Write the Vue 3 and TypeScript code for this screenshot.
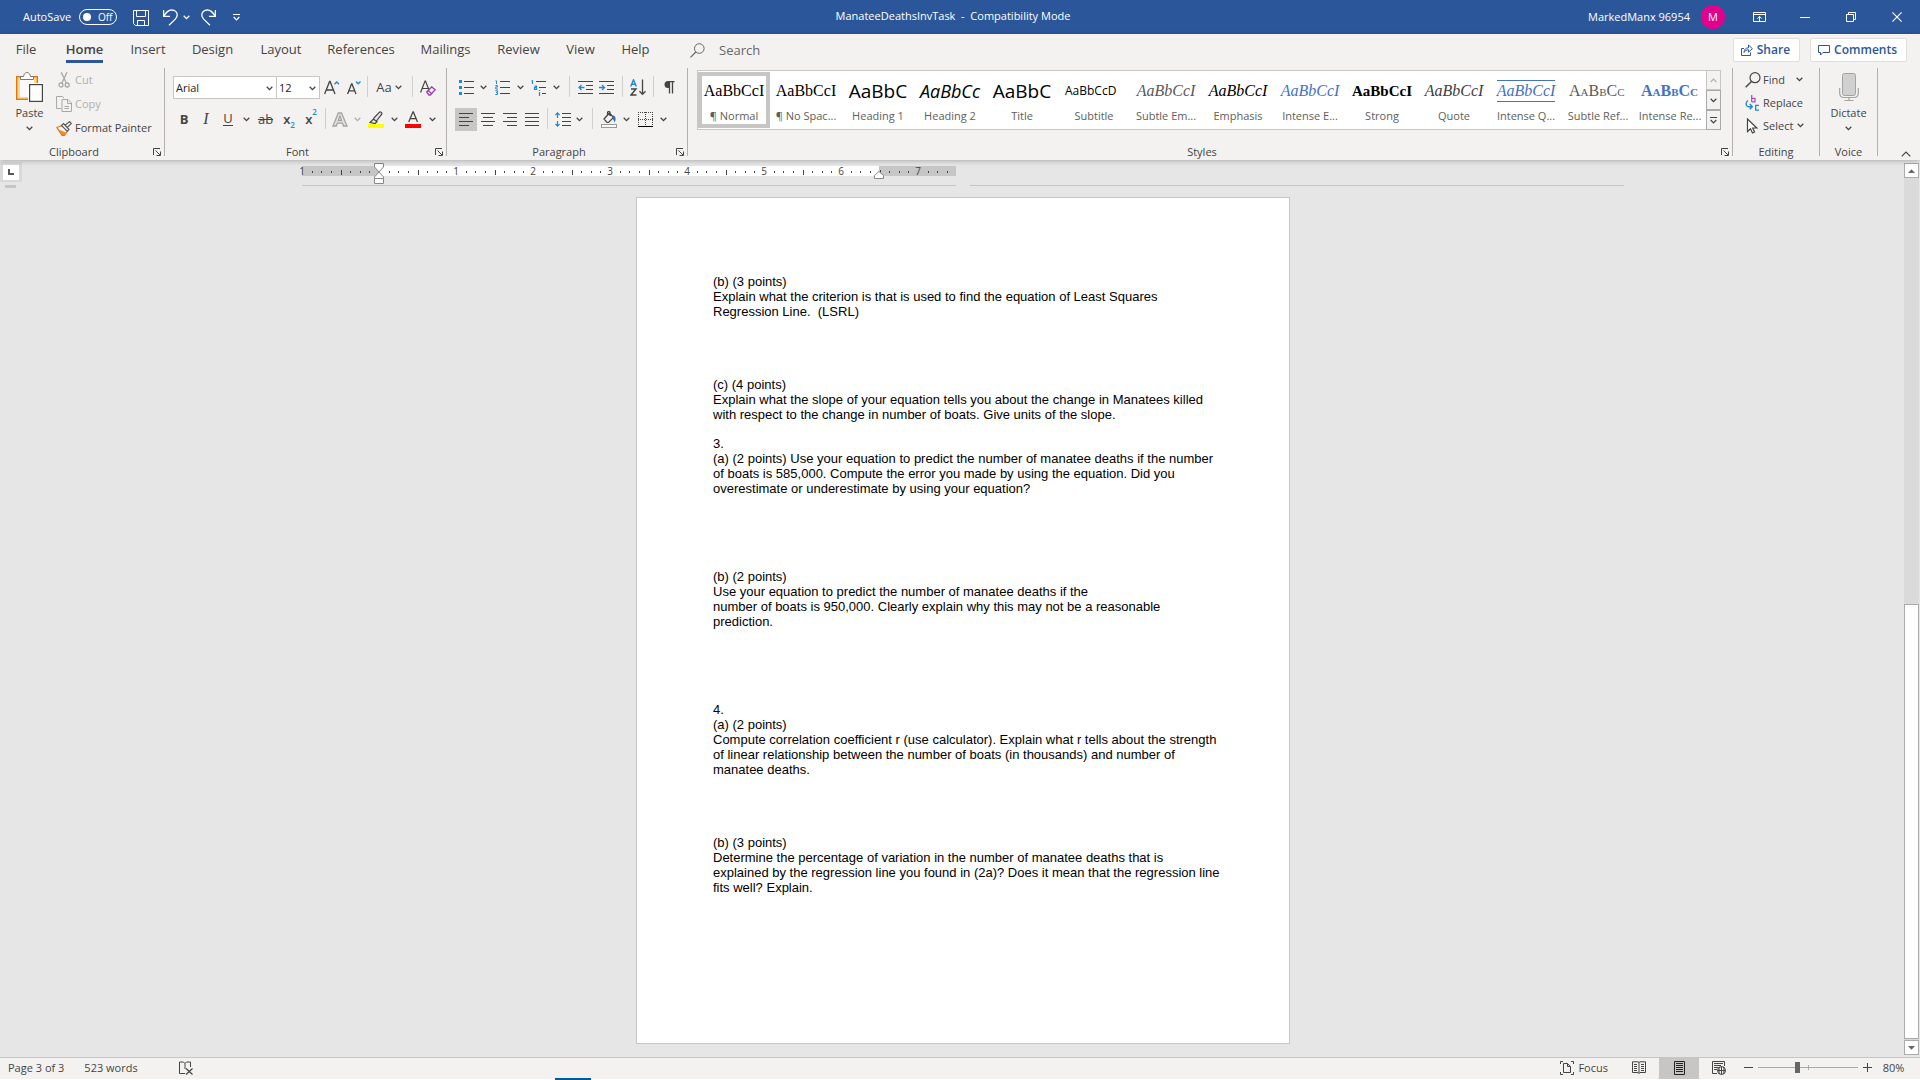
<script setup lang="ts">
import { h, ref } from 'vue'

interface Glyph { w: number; h: number; body: string }
interface Control { w: number; icon?: string; label?: string; off?: boolean; on?: boolean; sep?: boolean }

const K = '#444444'
const B = '#1e8bcd'
const lines = (xs: number[][]) =>
  xs.map(([x1, x2, y]) => `<path d="M${x1} ${y + 0.5}H${x2}" stroke="${K}"/>`).join('')

const glyphs: Record<string, Glyph> = {
  chev: { w: 7, h: 5, body: `<path d="M.7 .8L3.5 3.6L6.3 .8" stroke="currentColor" stroke-width="1.3"/>` },
  chevUp: { w: 7, h: 5, body: `<path d="M.7 4L3.5 1.2L6.3 4" stroke="currentColor" stroke-width="1.2"/>` },
  more: { w: 7, h: 7, body: `<path d="M0 .5H7M.7 3L3.5 5.8L6.3 3" stroke="currentColor" stroke-width="1.2"/>` },
  collapse: { w: 10, h: 6, body: `<path d="M.7 5.3L5 1L9.3 5.3" stroke="${K}" stroke-width="1.2"/>` },
  launch: { w: 8, h: 8, body: `<path d="M.5 7V.5H7M2.5 2.5L7 7M7.5 3.5V7.5H3.5" stroke="${K}"/>` },
  save: { w: 16, h: 16, body: `<path d="M.5 .5H15.5V15.5H2.5L.5 13.5ZM3.5 .5V6.5H12.5V.5M4.5 15.5V10.5H11.5V15.5" stroke="#fff"/>` },
  undo: { w: 15, h: 17, body: `<path d="M.6 1V7.4H7M1 7C3 3.5 5.5 1 8.6 1C12 1 14.2 3.2 14.2 6C14.2 7.7 13.4 9 12.3 10.1L6 16.2" stroke="#fff" stroke-width="1.3"/>` },
  redo: { w: 15, h: 17, body: `<path d="M14.4 1V7.4H8M14 7C12 3.5 9.5 1 6.4 1C3 1 .8 3.2 .8 6C.8 7.7 1.6 9 2.7 10.1L9 16.2" stroke="#fff" stroke-width="1.3"/>` },
  display: { w: 13, h: 10, body: `<path d="M.5 .5H12.5V9.5H.5ZM.5 2.5H12.5M6.5 9V4.5M4.3 6.6L6.5 4.4L8.7 6.6" stroke="#fff"/>` },
  min: { w: 10, h: 10, body: `<path d="M0 5.5H10" stroke="#fff"/>` },
  restore: { w: 10, h: 10, body: `<path d="M.5 2.5H7.5V9.5H.5ZM2.5 2.5V.5H9.5V7.5H7.5" stroke="#fff"/>` },
  close: { w: 10, h: 10, body: `<path d="M.4 .4L9.6 9.6M9.6 .4L.4 9.6" stroke="#fff" stroke-width="1.1"/>` },
  search: { w: 15, h: 15, body: `<circle cx="9.3" cy="5.5" r="4.8" stroke="#666"/><path d="M5.8 9L.5 14.3" stroke="#666" stroke-width="1.2"/>` },
  share: { w: 12, h: 12, body: `<path d="M3 4.5H.5V11.5H9.5V8.5" stroke="#2b579a"/><path d="M3 8.5C3.2 5.2 5 3.8 7.5 3.8V1L11.4 4.7L7.5 8.2V5.8C5.5 5.8 4 6.6 3 8.5Z" stroke="#2b579a"/>` },
  comment: { w: 12, h: 11, body: `<path d="M.5 .5H11.5V7.5H5L2.5 10V7.5H.5Z" stroke="#2b579a"/>` },
  paste: { w: 27, h: 30, body: `<rect x=".7" y="4.7" width="20.6" height="22.6" fill="#fbd98d" stroke="#e0760f" stroke-width="1.4"/><path d="M4 6H18V25H4Z" fill="#fafafa"/><path d="M4.5 7.5V4.5H7.5C8 2 9 .6 11 .6S14 2 14.5 4.5H17.5V7.5Z" fill="#fff" stroke="#777"/><rect x="12" y="11" width="15" height="19" fill="#fff"/><rect x="13.6" y="12.6" width="12.8" height="16.8" fill="#fff" stroke="#444" stroke-width="1.2"/>` },
  cut: { w: 12, h: 16, body: `<path d="M3.2 .3L8.3 11M9 .3L3.9 11" stroke="#a8a8a8" stroke-width="1.3"/><circle cx="3" cy="13" r="2" stroke="#a8a8a8" stroke-width="1.3"/><circle cx="9.2" cy="13" r="2" stroke="#a8a8a8" stroke-width="1.3"/>` },
  copy: { w: 16, h: 16, body: `<path d="M5 12.5H.5V.5H6.5L8 2" stroke="#a8a8a8"/><path d="M6 3.5H12L15.5 7V15.5H6ZM11.5 3.5V7.5H15.5M8.5 10.5H13M8.5 12.5H13" stroke="#a8a8a8"/>` },
  painter: { w: 16, h: 15, body: `<path d="M1 6.5L6.5 4.5L11.5 10L8.5 14.3H6Z" fill="#fff" stroke="#e0760f" stroke-width="1.3"/><path d="M3 8.5L10 11.5L8.5 14H6Z" fill="#ef8a2e"/><path d="M5.5 4.5L7.5 2.6L13 8.5L11.2 10.2ZM9 4.5L13.5 .6L15.3 2.4L11.3 6.5" fill="#fff" stroke="#555" stroke-width="1.1"/>` },
  grow: { w: 16, h: 15, body: `<path d="M.6 14L5.6 1.5H6.1L11 14M2.3 10H9.3" stroke="${K}" stroke-width="1.3"/><path d="M10.5 4.2L12.7 2L15 4.2" stroke="${B}" stroke-width="1.4"/>` },
  shrink: { w: 14, h: 15, body: `<path d="M.6 14L4.5 4H5L9 14M2.2 10.8H7.4" stroke="${K}" stroke-width="1.3"/><path d="M9 1.5L11.2 3.7L13.5 1.5" stroke="${B}" stroke-width="1.4"/>` },
  clear: { w: 16, h: 16, body: `<path d="M.6 12.5L5 1H5.5L9 10M2.2 8.5H8" stroke="${K}" stroke-width="1.2"/><path d="M6.7 12L11.7 7L15.2 9.7L10.2 15H9Z" fill="#fff" stroke="#9b3fae" stroke-width="1.4"/><path d="M8 10.5L12 14" stroke="#9b3fae" stroke-width="1.3"/>` },
  outlineA: { w: 16, h: 15, body: `<path d="M1 14L6.3 1H9.5L15 14H11.5L10.5 11.2H5.3L4.3 14ZM6.2 8.5H9.6L7.9 4Z" fill="#e4e4e4" stroke="#a3a3a3" stroke-width="1.3"/>` },
  highlight: { w: 16, h: 17, body: `<path d="M2 11.5L5.5 8L9 10.8L7 12.5ZM5.5 7.5L11.5 1.2C12.5 .3 14.5 1.8 13.7 3.2L8.5 10" stroke="${K}" stroke-width="1.2" fill="#e8e8e8"/><rect y="13" width="16" height="4" fill="#ffff00"/>` },
  fontColor: { w: 16, h: 17, body: `<path d="M3.7 11L8 .8H8.3L12.5 11M5.2 7.6H11" stroke="${K}" stroke-width="1.3"/><rect y="13" width="16" height="4" fill="#ff0000"/>` },
  bullets: { w: 15, h: 15, body: `<path d="M0 0H3V3H0ZM0 6H3V9H0ZM0 12H3V15H0Z" fill="${B}"/>` + lines([[5, 15, 1], [5, 15, 7], [5, 15, 13]]) },
  numbers: { w: 15, h: 15, body: lines([[5, 15, 1], [5, 15, 7], [5, 15, 13]]) + `<path d="M.5 .8H1.5V4M.3 5.6H2.5V7H.8V9H3M.3 10.7H2.5V12.5H1M2.5 12.5V14.5H.3" stroke="${B}"/>` },
  multi: { w: 16, h: 16, body: lines([[5, 15, 1], [8, 15, 7], [11, 15, 13]]) + `<path d="M.5 .8H1.5V4M3.5 6.2H5.5V9.5H3.5V7.7H5.5M8.5 12V16M8.5 10V11" stroke="${B}" stroke-width="1.2"/>` },
  outdent: { w: 15, h: 13, body: lines([[0, 15, 0], [8, 15, 4], [8, 15, 8], [0, 15, 12]]) + `<path d="M6.5 6.5H1M3.5 4L1 6.5L3.5 9" stroke="${B}" stroke-width="1.3"/>` },
  indent: { w: 15, h: 13, body: lines([[0, 15, 0], [8, 15, 4], [8, 15, 8], [0, 15, 12]]) + `<path d="M0 6.5H5.5M3 4L5.5 6.5L3 9" stroke="${B}" stroke-width="1.3"/>` },
  sort: { w: 17, h: 17, body: `<path d="M.7 7.5L3.5 .8L6.3 7.5M1.7 5.3H5.3" stroke="${B}" stroke-width="1.4"/><path d="M1 10H6L1 16H6.5" stroke="${K}" stroke-width="1.4"/><path d="M12.5 .5V15.5M9.5 12.2L12.5 15.4L15.5 12.2" stroke="${K}" stroke-width="1.3"/>` },
  pilcrow: { w: 11, h: 13, body: `<path d="M5 7H4A3.5 3.5 0 0 1 4 0H5Z" fill="${K}"/><path d="M5.5 12.5V.5M8.5 12.5V.5M4 .5H10.5" stroke="${K}" stroke-width="1.3"/>` },
  left: { w: 15, h: 13, body: lines([[0, 14, 0], [0, 10, 4], [0, 14, 8], [0, 10, 12]]) },
  center: { w: 15, h: 13, body: lines([[0, 14, 0], [2, 12, 4], [0, 14, 8], [2, 12, 12]]) },
  right: { w: 15, h: 13, body: lines([[0, 14, 0], [4, 14, 4], [0, 14, 8], [4, 14, 12]]) },
  justify: { w: 15, h: 13, body: lines([[0, 14, 0], [0, 14, 4], [0, 14, 8], [0, 14, 12]]) },
  spacing: { w: 16, h: 15, body: lines([[7, 16, 1], [7, 16, 5], [7, 16, 9], [7, 16, 13]]) + `<path d="M2.5 1V6M.5 3L2.5 .9L4.5 3M2.5 14V9M.5 12L2.5 14.1L4.5 12" stroke="${B}" stroke-width="1.2"/>` },
  shading: { w: 16, h: 17, body: `<path d="M3 8L8.5 2L12.5 6.5L7.5 11.5H6ZM6.5 4V1.5C6.5 .2 9 .2 9 1.5V5" stroke="${K}" stroke-width="1.2"/><path d="M12 4.5C15 5 15 8 13.8 11.5L11.5 7Z" fill="#2b6fb5"/><rect x=".5" y="13.5" width="15" height="3" stroke="#999" fill="#fff"/>` },
  borders: { w: 15, h: 15, body: `<path d="M0 .5H15M0 7.5H15M.5 0V14M7.5 0V14M14.5 0V14" stroke="${K}" stroke-dasharray="1 1"/><path d="M0 14.5H15" stroke="#000" stroke-width="1"/>` },
  find: { w: 16, h: 16, body: `<circle cx="10" cy="5.7" r="5" stroke="${K}" stroke-width="1.2"/><path d="M6.5 9.5L.6 15.3" stroke="${K}" stroke-width="1.4"/>` },
  replace: { w: 16, h: 16, body: `<path d="M6.7 0V7M6.7 3.3H10V6.9H6.7" stroke="#b24fc0" stroke-width="1.3"/><path d="M14 10.3H10.7V15.2H14" stroke="${B}" stroke-width="1.3"/><path d="M3 5.5C.5 7 .5 11 3 11.7H7M4.8 9L7.3 11.7L4.8 14.3" stroke="${B}" stroke-width="1.4"/>` },
  select: { w: 16, h: 16, body: `<path d="M2.5 1V13.5L5.5 10.7L7.5 15L9.5 14L7.7 10H11.8Z" fill="#fff" stroke="${K}" stroke-width="1.2"/>` },
  mic: { w: 20, h: 28, body: `<rect x="3.5" y=".5" width="13" height="22" rx="2" fill="#d0d0d0" stroke="#a3a3a3"/><path d="M.7 15V20C.7 23 2.5 24.5 5 24.5H15C17.5 24.5 19.3 23 19.3 20V15M10 24.5V27.5M5.5 27.5H14.5" stroke="#a3a3a3" stroke-width="1.2"/>` },
  proof: { w: 14, h: 14, body: `<path d="M6 12.5H.5V1H4.5L6 2.5L7.5 1H11.5V6M6 2.5V8" stroke="${K}"/><path d="M7 7.5L13.5 13.5M13.5 7.5L7 13.5" stroke="${K}" stroke-width="1.2"/>` },
  focus: { w: 14, h: 14, body: `<path d="M3 .5H.5V3M.5 11V13.5H3M11 .5H13.5V3M13.5 11V13.5H11M3.5 2.5H7.5L10.5 5.5V11.5H3.5ZM7.5 2.5V5.5H10.5" stroke="${K}"/>` },
  read: { w: 14, h: 13, body: `<path d="M7 1.5L6 .8H.5V11.5H6L7 12.5L8 11.5H13.5V.8H8ZM7 1.5V12.5M2 3.5H5M2 5.5H5M2 7.5H5M2 9.5H5M9 3.5H12M9 5.5H12M9 7.5H12M9 9.5H12" stroke="${K}"/>` },
  print: { w: 11, h: 14, body: `<path d="M.5 .5H10.5V13.5H.5ZM2 2.5H9M2 4.5H9M2 6.5H9M2 8.5H9M2 10.5H9" stroke="#222"/>` },
  web: { w: 14, h: 14, body: `<path d="M5 12.5H.5V.5H12.5V5M2 2.5H11M2 4.5H9M2 6.5H6M2 8.5H5" stroke="${K}"/><circle cx="9.5" cy="9.5" r="4" stroke="${K}"/><path d="M5.5 9.5H13.5M9.5 5.5V13.5M7.5 6C6.8 8 6.8 11 7.5 13M11.5 6C12.2 8 12.2 11 11.5 13" stroke="${K}"/>` },
  minus: { w: 9, h: 9, body: `<path d="M0 4.5H9" stroke="${K}"/>` },
  plus: { w: 9, h: 9, body: `<path d="M0 4.5H9M4.5 0V9" stroke="${K}"/>` },
  up: { w: 7, h: 4, body: `<path d="M0 4L3.5 .3L7 4Z" fill="#666"/>` },
  down: { w: 7, h: 4, body: `<path d="M0 0L3.5 3.7L7 0Z" fill="#666"/>` },
  tab: { w: 6, h: 6, body: `<path d="M1 0V5H6" stroke="#555" stroke-width="2"/>` }
}

const Ic = (props: { n: string }) => {
  const g = glyphs[props.n]
  return h('svg', { width: g.w, height: g.h, viewBox: `0 0 ${g.w} ${g.h}`, fill: 'none', 'aria-hidden': 'true', innerHTML: g.body })
}
Ic.props = ['n']

const tabs = [
  { name: 'File', w: 50 }, { name: 'Home', w: 67 }, { name: 'Insert', w: 60 }, { name: 'Design', w: 69 },
  { name: 'Layout', w: 68 }, { name: 'References', w: 92 }, { name: 'Mailings', w: 77 },
  { name: 'Review', w: 69 }, { name: 'View', w: 55 }, { name: 'Help', w: 55 }
]
const activeTab = ref('Home')

const fontTop: Control[] = [
  { w: 23, icon: 'grow', label: 'Increase font size' }, { w: 22, icon: 'shrink', label: 'Decrease font size' },
  { w: 5, sep: true }
]
const effects: Control[] = [
  { w: 6, sep: true },
  { w: 23, icon: 'outlineA', label: 'Text effects' }, { w: 12, icon: 'chev', label: 'Text effects options', off: true },
  { w: 25, icon: 'highlight', label: 'Highlight colour' }, { w: 12, icon: 'chev', label: 'Highlight options' },
  { w: 26, icon: 'fontColor', label: 'Font colour' }, { w: 12, icon: 'chev', label: 'Font colour options' }
]
const paraTop: Control[] = [
  { w: 22, icon: 'bullets', label: 'Bullets' }, { w: 13, icon: 'chev', label: 'Bullet options' },
  { w: 24, icon: 'numbers', label: 'Numbering' }, { w: 13, icon: 'chev', label: 'Numbering options' },
  { w: 23, icon: 'multi', label: 'Multilevel list' }, { w: 12, icon: 'chev', label: 'Multilevel options' },
  { w: 14, sep: true },
  { w: 19, icon: 'outdent', label: 'Decrease indent' }, { w: 23, icon: 'indent', label: 'Increase indent' },
  { w: 8, sep: true }, { w: 24, icon: 'sort', label: 'Sort' },
  { w: 6, sep: true }, { w: 26, icon: 'pilcrow', label: 'Show marks' }
]
const paraBottom: Control[] = [
  { w: 22, icon: 'left', label: 'Align left', on: true }, { w: 22, icon: 'center', label: 'Centre' },
  { w: 22, icon: 'right', label: 'Align right' }, { w: 22, icon: 'justify', label: 'Justify' },
  { w: 8, sep: true },
  { w: 23, icon: 'spacing', label: 'Line spacing' }, { w: 10, icon: 'chev', label: 'Spacing options' },
  { w: 16, sep: true },
  { w: 17, icon: 'shading', label: 'Shading' }, { w: 18, icon: 'chev', label: 'Shading options' },
  { w: 20, icon: 'borders', label: 'Borders' }, { w: 16, icon: 'chev', label: 'Border options' }
]

const styles = [
  { name: '¶ Normal', sample: 'AaBbCcI', kind: 'serif' },
  { name: '¶ No Spac...', sample: 'AaBbCcI', kind: 'serif' },
  { name: 'Heading 1', sample: 'AaBbC', kind: 'head' },
  { name: 'Heading 2', sample: 'AaBbCc', kind: 'head slant' },
  { name: 'Title', sample: 'AaBbC', kind: 'head' },
  { name: 'Subtitle', sample: 'AaBbCcD', kind: 'sub' },
  { name: 'Subtle Em...', sample: 'AaBbCcI', kind: 'serif slant grey' },
  { name: 'Emphasis', sample: 'AaBbCcI', kind: 'serif slant' },
  { name: 'Intense E...', sample: 'AaBbCcI', kind: 'serif slant blue' },
  { name: 'Strong', sample: 'AaBbCcI', kind: 'serif bold' },
  { name: 'Quote', sample: 'AaBbCcI', kind: 'serif slant dark' },
  { name: 'Intense Q...', sample: 'AaBbCcI', kind: 'serif slant blue ruled' },
  { name: 'Subtle Ref...', sample: 'AaBbCc', kind: 'serif caps grey' },
  { name: 'Intense Re...', sample: 'AaBbCc', kind: 'serif caps bold blue' }
]

// Ruler positions in pixels: an inch is 77 wide and zero sits at the left margin.
const inch = 77
const zero = 77
const numerals = [-1, 1, 2, 3, 4, 5, 6, 7].map(n => ({ x: zero + n * inch, t: Math.abs(n) }))
const ticks = Array.from({ length: 68 }, (_, i) => i)
  .filter(i => i % 8 !== 0)
  .map(i => ({ x: Math.round((i * inch) / 8), half: i % 4 === 0 }))

const blocks = [
  { gap: 'g0', lines: ['(b) (3 points)', 'Explain what the criterion is that is used to find the equation of Least Squares', 'Regression Line.  (LSRL)'] },
  { gap: 'g4', lines: ['(c) (4 points)', 'Explain what the slope of your equation tells you about the change in Manatees killed', 'with respect to the change in number of boats. Give units of the slope.'] },
  { gap: 'g1', lines: ['3.', '(a) (2 points) Use your equation to predict the number of manatee deaths if the number', 'of boats is 585,000. Compute the error you made by using the equation. Did you', 'overestimate or underestimate by using your equation?'] },
  { gap: 'g5', lines: ['(b) (2 points)', 'Use your equation to predict the number of manatee deaths if the', 'number of boats is 950,000. Clearly explain why this may not be a reasonable', 'prediction.'] },
  { gap: 'g5', lines: ['4.', '(a) (2 points)', 'Compute correlation coefficient r (use calculator). Explain what r tells about the strength', 'of linear relationship between the number of boats (in thousands) and number of', 'manatee deaths.'] },
  { gap: 'g4', lines: ['(b) (3 points)', 'Determine the percentage of variation in the number of manatee deaths that is', 'explained by the regression line you found in (2a)? Does it mean that the regression line', 'fits well? Explain.'] }
]
</script>

<template>
  <div class="app">
    <header class="titlebar">
      <div class="quick">
        <label class="autosave">AutoSave
          <span class="switch"><input type="checkbox"><span>Off</span></span>
        </label>
        <button class="q-save" aria-label="Save"><Ic n="save" /></button>
        <button class="q-undo" aria-label="Undo"><Ic n="undo" /></button>
        <button class="q-chev" aria-label="Undo options"><Ic n="chev" /></button>
        <button class="q-redo" aria-label="Redo"><Ic n="redo" /></button>
        <button class="q-more" aria-label="Customise toolbar"><Ic n="more" /></button>
      </div>
      <div class="doc-title">ManateeDeathsInvTask&nbsp; - &nbsp;Compatibility Mode</div>
      <div class="window">
        <span class="user">MarkedManx 96954</span>
        <button class="avatar">M</button>
        <button class="win" aria-label="Ribbon display options"><Ic n="display" /></button>
        <button class="win" aria-label="Minimise"><Ic n="min" /></button>
        <button class="win" aria-label="Restore"><Ic n="restore" /></button>
        <button class="win" aria-label="Close"><Ic n="close" /></button>
      </div>
    </header>

    <section class="ribbon">
      <nav class="tabs">
        <button v-for="t in tabs" :key="t.name" class="tab" :class="{ active: t.name === activeTab }" :style="{ width: t.w + 'px' }" @click="activeTab = t.name"><span>{{ t.name }}</span></button>
        <label class="search"><Ic n="search" /><input type="text" placeholder="Search" aria-label="Search"></label>
        <div class="actions">
          <button class="action"><Ic n="share" />Share</button>
          <button class="action"><Ic n="comment" />Comments</button>
        </div>
      </nav>

      <div class="groups">
        <section class="group clipboard">
          <div class="body clip-body">
            <button class="tall paste"><Ic n="paste" /><span>Paste</span><Ic n="chev" /></button>
            <div class="stack clip-stack">
              <button class="line off" disabled><span class="slot"><Ic n="cut" /></span>Cut</button>
              <button class="line off" disabled><span class="slot"><Ic n="copy" /></span>Copy</button>
              <button class="line"><span class="slot"><Ic n="painter" /></span>Format Painter</button>
            </div>
          </div>
          <div class="caption"><span>Clipboard</span><button aria-label="Clipboard settings"><Ic n="launch" /></button></div>
        </section>

        <section class="group font">
          <div class="body rows">
            <div class="row">
              <span class="combo family"><select aria-label="Font"><option>Arial</option></select><Ic n="chev" /></span>
              <span class="combo size"><select aria-label="Font size"><option>12</option></select><Ic n="chev" /></span>
              <template v-for="(c, i) in fontTop" :key="i">
                <span v-if="c.sep" class="sep" :style="{ width: c.w + 'px' }" />
                <button v-else class="ctl" :style="{ width: c.w + 'px' }" :aria-label="c.label"><Ic :n="c.icon" /></button>
              </template>
              <button class="ctl case"><span>Aa</span><Ic n="chev" /></button>
              <span class="sep narrow" />
              <button class="ctl clear" aria-label="Clear formatting"><Ic n="clear" /></button>
            </div>
            <div class="row">
              <button class="ctl letter strong">B</button>
              <button class="ctl letter ital">I</button>
              <button class="ctl letter under"><span>U</span></button>
              <button class="ctl small" aria-label="Underline options"><Ic n="chev" /></button>
              <button class="ctl letter strike">ab</button>
              <button class="ctl letter script">x<sub>2</sub></button>
              <button class="ctl letter script">x<sup>2</sup></button>
              <template v-for="(c, i) in effects" :key="i">
                <span v-if="c.sep" class="sep" :style="{ width: c.w + 'px' }" />
                <button v-else class="ctl" :class="{ off: c.off }" :style="{ width: c.w + 'px' }" :aria-label="c.label"><Ic :n="c.icon" /></button>
              </template>
            </div>
          </div>
          <div class="caption"><span>Font</span><button aria-label="Font settings"><Ic n="launch" /></button></div>
        </section>

        <section class="group para">
          <div class="body rows">
            <div v-for="(r, k) in [paraTop, paraBottom]" :key="k" class="row">
              <template v-for="(c, i) in r" :key="i">
                <span v-if="c.sep" class="sep" :style="{ width: c.w + 'px' }" />
                <button v-else class="ctl" :class="{ on: c.on }" :style="{ width: c.w + 'px' }" :aria-label="c.label"><Ic :n="c.icon" /></button>
              </template>
            </div>
          </div>
          <div class="caption"><span>Paragraph</span><button aria-label="Paragraph settings"><Ic n="launch" /></button></div>
        </section>

        <section class="group styles">
          <div class="body">
            <div class="gallery">
              <button v-for="(s, i) in styles" :key="s.name" class="style" :class="{ chosen: i === 0 }">
                <span class="preview" :class="s.kind">{{ s.sample }}</span>
                <span class="style-name">{{ s.name }}</span>
              </button>
              <div class="scroller">
                <button class="off" aria-label="Previous styles"><Ic n="chevUp" /></button>
                <button aria-label="Next styles"><Ic n="chev" /></button>
                <button aria-label="More styles"><Ic n="more" /></button>
              </div>
            </div>
          </div>
          <div class="caption"><span>Styles</span><button aria-label="Style settings"><Ic n="launch" /></button></div>
        </section>

        <section class="group editing">
          <div class="body stack edit-stack">
            <button class="line"><span class="slot"><Ic n="find" /></span>Find<Ic n="chev" class="far" /></button>
            <button class="line"><span class="slot"><Ic n="replace" /></span>Replace</button>
            <button class="line"><span class="slot"><Ic n="select" /></span>Select<Ic n="chev" class="near" /></button>
          </div>
          <div class="caption plain"><span>Editing</span></div>
        </section>

        <section class="group voice">
          <div class="body">
            <button class="tall"><Ic n="mic" /><span>Dictate</span><Ic n="chev" /></button>
          </div>
          <div class="caption plain"><span>Voice</span></div>
        </section>

        <button class="collapse" aria-label="Collapse ribbon"><Ic n="collapse" /></button>
      </div>
    </section>

    <main class="workspace">
      <aside class="gutter">
        <button class="tab-stop" aria-label="Tab stop"><span><Ic n="tab" /></span></button>
        <i />
      </aside>
      <div class="canvas">
        <div class="spread">
          <svg class="ruler" width="654" height="24" viewBox="0 0 654 24" fill="none">
            <rect y="5" width="77" height="10" fill="#c6c6c6" />
            <rect x="77" y="5" width="500" height="10" fill="#fff" />
            <rect x="577" y="5" width="77" height="10" fill="#c6c6c6" />
            <text v-for="n in numerals" :key="n.x" class="numeral" :x="n.x" y="14" text-anchor="middle">{{ n.t }}</text>
            <rect v-for="t in ticks" :key="t.x" :x="t.x" :y="t.half ? 9 : 10" width="1" :height="t.half ? 5 : 2" fill="#444" />
            <path d="M72.5 2.5H81.5V6L77 11L72.5 6ZM77 11L81.5 16V17.5H72.5V16ZM72.5 17.5H81.5V22.5H72.5Z" fill="#fff" stroke="#888" />
            <path d="M572.5 17.5V14.5L577 10.5L581.5 14.5V17.5Z" fill="#fff" stroke="#888" />
          </svg>
          <div class="edges"><i /><i /></div>
        </div>
        <article class="page">
          <p v-for="(b, i) in blocks" :key="i" :class="b.gap">{{ b.lines.join('\n') }}</p>
        </article>
      </div>
      <div class="scrollbar">
        <button aria-label="Scroll up"><Ic n="up" /></button>
        <div class="track"><div class="thumb" /></div>
        <button aria-label="Scroll down"><Ic n="down" /></button>
      </div>
    </main>

    <footer class="status">
      <button class="pages">Page 3 of 3</button>
      <button class="words">523 words</button>
      <button class="proof" aria-label="Proofing"><Ic n="proof" /></button>
      <div class="views">
        <button class="focus"><Ic n="focus" />Focus</button>
        <button class="view" aria-label="Read mode"><Ic n="read" /></button>
        <button class="view current" aria-label="Print layout"><Ic n="print" /></button>
        <button class="view" aria-label="Web layout"><Ic n="web" /></button>
        <button class="zoom-step" aria-label="Zoom out"><Ic n="minus" /></button>
        <input type="range" min="0" max="100" value="39" aria-label="Zoom">
        <button class="zoom-step" aria-label="Zoom in"><Ic n="plus" /></button>
        <button class="percent">80%</button>
      </div>
      <div class="taskbar-mark" />
    </footer>
  </div>
</template>

<style>
body { margin: 0; }
</style>

<style scoped>
.app { display: flex; flex-direction: column; min-height: 100vh; font: 11px/16px "Open Sans", "Noto Sans", sans-serif; color: #444; background: #e6e6e6; }
* { box-sizing: border-box; }
button, input, select { font: inherit; color: inherit; border: 0; padding: 0; margin: 0; background: none; }
button { display: flex; align-items: center; justify-content: center; white-space: nowrap; }
svg { display: block; flex: none; }

.titlebar { display: flex; align-items: center; height: 34px; background: #2b579a; color: #fff; }
.quick { flex: 1; display: flex; align-items: center; }
.autosave { display: flex; align-items: center; gap: 8px; margin-left: 23px; }
.switch { display: flex; align-items: center; width: 38px; height: 16px; border: 1px solid #fff; border-radius: 8px; padding-left: 3px; gap: 7px; font-size: 10px; }
.switch input { appearance: none; width: 8px; height: 8px; border-radius: 50%; background: #fff; }
.q-save { margin-left: 16px; padding-top: 2px; }
.q-undo { margin-left: 14px; }
.q-chev { margin-left: 5px; }
.q-redo { margin-left: 11px; }
.q-more { margin-left: 17px; }
.doc-title { margin-right: 14px; padding-bottom: 2px; }
.window { flex: 1; display: flex; align-items: center; justify-content: flex-end; height: 100%; }
.user { margin-right: 11px; }
.avatar { width: 24px; height: 24px; border-radius: 50%; background: #e3008c; margin-right: 11px; }
.win { width: 46px; height: 32px; }

.ribbon { background: #f3f2f1; height: 126px; position: relative; z-index: 1; box-shadow: 0 1px 5px rgba(0, 0, 0, 0.25); }
.tabs { display: flex; align-items: center; height: 34px; padding: 0 13px 2px 1px; font-size: 13px; }
.tab { height: 28px; }
.tab span { height: 26px; line-height: 22px; padding-top: 1px; border-bottom: 3px solid transparent; }
.tab.active span { font-weight: 600; border-bottom-color: #2b579a; }
.search { display: flex; align-items: center; gap: 14px; margin-left: 27px; }
.search input { width: 120px; }
.search input::placeholder { color: #666; opacity: 1; }
.actions { display: flex; gap: 10px; margin-left: auto; }
.action { height: 24px; padding: 0 9px 0 7px; gap: 4px; background: #fff; border: 1px solid #e1dfdd; border-radius: 2px; color: #2b579a; font-size: 12px; font-weight: 600; }

.groups { display: flex; height: 92px; }
.group { display: flex; flex-direction: column; height: 88px; border-right: 1px solid #b3b0ad; }
.body { flex: 1; }
.caption { display: flex; align-items: center; height: 16px; margin-bottom: -4px; padding-right: 3px; }
.caption span { flex: 1; text-align: center; }
.caption button { width: 13px; justify-content: flex-end; }
.caption.plain { padding: 0; }
.clipboard { width: 165px; }
.font { width: 282px; padding-left: 8px; }
.font .caption, .para .caption { margin-left: -8px; }
.para { width: 241px; padding-left: 8px; }
.styles { flex: 1; min-width: 0; }
.editing { width: 87px; }
.voice { width: 58px; }

.clip-body { display: flex; }
.tall { flex-direction: column; justify-content: flex-start; width: 57px; padding-top: 4px; }
.tall span { margin: 3px 0 5px; }
.tall svg:first-child { height: 30px; }
.paste { width: 53px; margin-left: 3px; }
.stack { display: flex; flex-direction: column; }
.line { justify-content: flex-start; height: 24px; }
.slot { display: flex; justify-content: center; width: 16px; margin-right: 3px; }
.off { color: #b1afad; }
.edit-stack { padding-left: 12px; }
.edit-stack .line { height: 23px; }
.edit-stack .slot { margin-right: 2px; }
.far { margin-left: 11px; }
.near { margin-left: 4px; }

.rows { display: flex; flex-direction: column; gap: 9px; padding-top: 8px; }
.row { display: flex; height: 23px; }
.combo { position: relative; display: flex; background: #fff; border: 1px solid #c8c6c4; }
.combo select { appearance: none; width: 100%; padding: 0 2px; color: #222; }
.combo svg { position: absolute; right: 3px; top: 9px; pointer-events: none; }
.family { width: 104px; }
.size { width: 44px; margin-left: -1px; }
.ctl { height: 23px; }
.ctl.on { background: #c8c6c4; }
.sep { position: relative; display: flex; justify-content: center; }
.sep::before { content: ""; width: 1px; height: 21px; background: #d2d0ce; }
.narrow { width: 5px; }
.case { width: 38px; gap: 3px; font-size: 13px; margin-right: 2px; }
.case span { padding-bottom: 2px; }
.clear { width: 26px; }
.letter { width: 22px; font-size: 13px; padding-bottom: 2px; }
.strong { font-weight: 700; }
.ital { font-family: "Liberation Serif", serif; font-style: italic; font-size: 16px; }
.under span { border-bottom: 1px solid #444; line-height: 14px; }
.small { width: 14px; }
.strike { width: 25px; text-decoration: line-through; }
.script { font-weight: 600; }
.script sub, .script sup { font-size: 8px; line-height: 8px; color: #1e8bcd; }
.script sub { align-self: flex-end; }
.script sup { align-self: flex-start; }

.gallery { display: flex; width: max-content; height: 60px; margin: 2px 0 0 9px; background: #fff; border: 1px solid #c8c6c4; }
.style { flex-direction: column; width: 72px; height: 56px; margin-top: 1px; padding-top: 5px; border: 4px solid transparent; }
.style.chosen { border-color: #c6c6c6; }
.preview { display: block; min-width: 58px; height: 22px; line-height: 22px; text-align: left; color: #000; font-size: 16px; }
.serif { font-family: "Liberation Serif", serif; }
.head { font-size: 19px; }
.sub { font-size: 12px; }
.slant { font-style: italic; }
.head.slant { font-size: 18px; }
.bold { font-weight: 700; }
.serif.bold { font-size: 15px; }
.grey { color: #5a5a5a; }
.dark { color: #404040; }
.blue { color: #4472c4; }
.ruled { border-top: 1px solid #4472c4; border-bottom: 1px solid #4472c4; line-height: 20px; }
.caps { font-variant: small-caps; }
.serif.caps.bold { font-size: 16px; }
.style-name { margin-top: 5px; height: 18px; line-height: 18px; color: #605e5c; }
.scroller { display: flex; flex-direction: column; width: 15px; margin: -1px -1px -1px 0; }
.scroller button { flex: 1; width: 15px; background: #f3f2f1; border: 1px solid #aaa; }
.scroller .off { border-color: #c8c6c4; color: #b1afad; }
.collapse { width: 42px; align-items: flex-end; justify-content: flex-end; padding: 0 9px 3px 0; }

.workspace { flex: 1; display: flex; }
.gutter { width: 22px; padding-top: 2px; }
.tab-stop { width: 22px; height: 20px; background: #d9d9d9; }
.tab-stop span { display: flex; align-items: center; justify-content: center; width: 16px; height: 15px; background: #fff; }
.gutter i { display: block; width: 11px; height: 3px; margin: 3px 0 0 5px; background: #c6c6c6; }
.canvas { flex: 1; display: flex; flex-direction: column; align-items: center; padding-bottom: 13px; }
.spread { width: 1322px; padding-top: 1px; }
.ruler { overflow: visible; }
.numeral { font-size: 10px; fill: #444; }
.edges { display: flex; justify-content: space-between; }
.edges i { width: 654px; height: 1px; background: #c6c6c6; }
.page { width: 654px; min-height: 847px; margin-top: 11px; padding: 76px 0 0 76px; background: #fff; border: 1px solid #c6c6c6; font: 13px/15px "Liberation Sans", Arial, sans-serif; color: #000; }
.page p { margin: 0; white-space: pre; }
.page .g1 { margin-top: 14px; }
.page .g4 { margin-top: 58px; }
.page .g5 { margin-top: 73px; }

.scrollbar { display: flex; flex-direction: column; width: 15px; margin: 3px 1px 2px 0; }
.scrollbar button { height: 15px; background: #fff; border: 1px solid #ababab; }
.track { flex: 1; display: flex; flex-direction: column; background: #dadada; }
.track::before { content: ""; flex: 427; }
.thumb { flex: 434; background: #fff; border: 1px solid #ababab; margin-bottom: 1px; }

.status { position: relative; display: flex; height: 23px; background: #f3f2f1; border-top: 1px solid #c6c6c6; border-bottom: 1px solid #fff; }
.status button { padding-bottom: 2px; }
.pages { margin-left: 8px; }
.words { margin-left: 20px; }
.proof { margin-left: 41px; }
.views { display: flex; margin-left: auto; }
.focus { gap: 4px; margin-right: 11px; }
.view { width: 40px; }
.view.current { background: #c8c6c4; }
.zoom-step { width: 19px; }
.views input { appearance: none; width: 100px; height: 19px; background: linear-gradient(#aaa, #aaa) 50px 50% / 1px 5px no-repeat, linear-gradient(#aaa, #aaa) 0 50% / 100% 1px no-repeat; }
.views input::-webkit-slider-thumb { appearance: none; width: 5px; height: 11px; background: #666; }
.percent { width: 33px; margin-right: 10px; }
.taskbar-mark { position: absolute; left: 555px; bottom: -1px; width: 36px; height: 2px; background: #005a9e; }
</style>
